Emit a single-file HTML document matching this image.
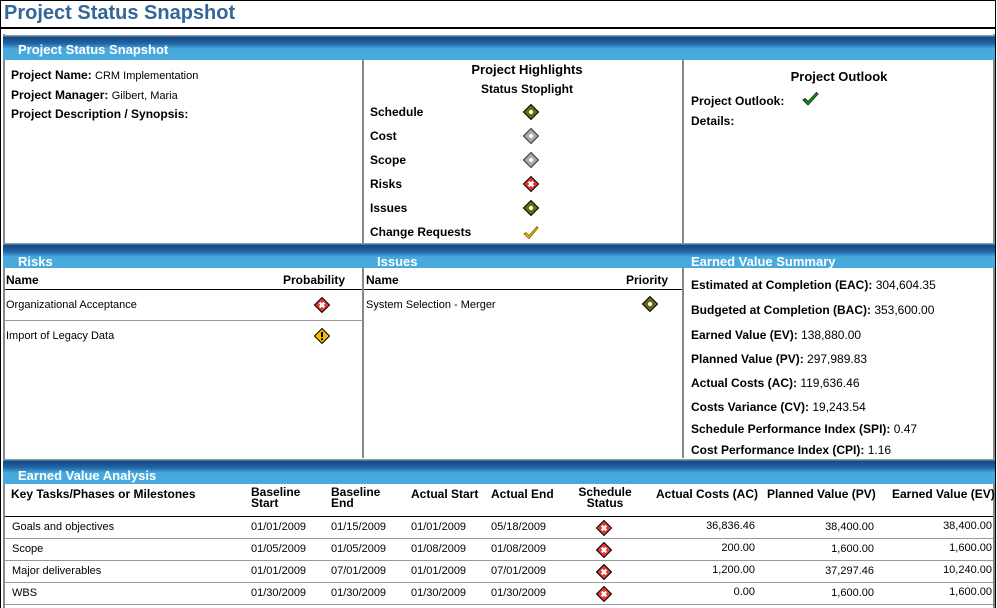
<!DOCTYPE html>
<html><head><meta charset="utf-8"><style>
*{margin:0;padding:0;box-sizing:border-box}
body{width:997px;height:608px;background:#fff;font-family:"Liberation Sans",Arial,sans-serif;color:#000;position:relative;overflow:hidden}
.a{position:absolute;white-space:nowrap}
.b{font-weight:bold;font-size:12px}
.r{font-size:11px}
.bar{position:absolute;height:25px;background:linear-gradient(#8a9bb0 0,#8a9bb0 1px,#154c86 2px,#1a5590 5px,#1f62a0 8px,#2b78b8 10px,#3990cc 12px,#48a9dd 14px,#48a9dd 100%);color:#fff;font-weight:bold;font-size:13px;padding:8px 0 0 15px;line-height:13px}
.vl{position:absolute;width:2px;background:#888}
.gl{position:absolute;height:1px;background:#999}
.bl{position:absolute;height:1px;background:#000}
svg{position:absolute}
</style></head><body>
<div style="position:absolute;left:0;top:0;width:996px;height:608px;border:1px solid #000;border-bottom:none"></div>
<div class="a" style="left:4px;top:2px;font-size:20px;font-weight:bold;color:#33669a">Project Status Snapshot</div>
<div class="bl" style="left:0;top:27px;width:996px;height:2px;background:#000"></div>

<div class="vl" style="left:3px;top:34px;height:574px"></div>
<div class="vl" style="left:993px;top:34px;height:574px"></div>

<div class="bar" style="left:3px;top:35px;width:992px;">Project Status Snapshot</div>
<div class="vl" style="left:362px;top:60px;height:184px"></div>
<div class="vl" style="left:682px;top:60px;height:184px"></div>

<div class="a b" style="left:11px;top:68px">Project Name: <span class="r" style="font-weight:normal">CRM Implementation</span></div>
<div class="a b" style="left:11px;top:88px">Project Manager: <span class="r" style="font-weight:normal">Gilbert, Maria</span></div>
<div class="a b" style="left:11px;top:107px">Project Description / Synopsis:</div>

<div class="a b" style="left:364px;width:326px;text-align:center;top:62px;font-size:13px">Project Highlights</div>
<div class="a b" style="left:364px;width:326px;text-align:center;top:82px">Status Stoplight</div>
<div class="a b" style="left:370px;top:105px">Schedule</div>
<div class="a b" style="left:370px;top:129px">Cost</div>
<div class="a b" style="left:370px;top:153px">Scope</div>
<div class="a b" style="left:370px;top:177px">Risks</div>
<div class="a b" style="left:370px;top:201px">Issues</div>
<div class="a b" style="left:370px;top:225px">Change Requests</div>

<svg width="0" height="0"><defs>
<g id="dg"><path d="M8 0.5L15.5 8L8 15.5L0.5 8Z" fill="#6b6b10" stroke="#000"/><circle cx="8" cy="8" r="2" fill="#fff"/></g>
<g id="dy"><path d="M8 0.5L15.5 8L8 15.5L0.5 8Z" fill="#aaa" stroke="#333"/><circle cx="8" cy="8" r="2" fill="#fff"/></g>
<g id="dr"><path d="M8 0.5L15.5 8L8 15.5L0.5 8Z" fill="#e03a30" stroke="#000"/><path d="M5.7 5.7L10.3 10.3M10.3 5.7L5.7 10.3" stroke="#fff" stroke-width="2.4"/></g>
<g id="dw"><path d="M8 0.5L15.5 8L8 15.5L0.5 8Z" fill="#f0c000" stroke="#000"/><path d="M8 4V9" stroke="#000" stroke-width="2"/><rect x="7" y="10.2" width="2" height="2"/></g>
</defs></svg>
<svg style="left:523px;top:104px" width="16" height="16"><use href="#dg"/></svg>
<svg style="left:523px;top:128px" width="16" height="16"><use href="#dy"/></svg>
<svg style="left:523px;top:152px" width="16" height="16"><use href="#dy"/></svg>
<svg style="left:523px;top:176px" width="16" height="16"><use href="#dr"/></svg>
<svg style="left:523px;top:200px" width="16" height="16"><use href="#dg"/></svg>
<svg style="left:523px;top:225px" width="16" height="15"><path d="M1 9L3 7.5L6 10.5L14 1.5L15 3L6 13.5Z" fill="#f5c000" stroke="#7a5a00" stroke-width="0.8"/></svg>

<div class="a b" style="left:684px;width:310px;text-align:center;top:69px;font-size:13px">Project Outlook</div>
<div class="a b" style="left:691px;top:94px">Project Outlook:</div>
<div class="a b" style="left:691px;top:114px">Details:</div>
<svg style="left:802px;top:91px" width="17" height="16"><path d="M1 9L3 7.5L6 10.5L14.5 1.5L16 3L6 14Z" fill="#1e9a1e" stroke="#003000" stroke-width="0.9"/></svg>

<div class="bar" style="left:3px;top:243px;width:992px;padding-top:12px"><span style="position:absolute;left:15px">Risks</span><span style="position:absolute;left:374px">Issues</span><span style="position:absolute;left:688px">Earned Value Summary</span></div>
<div class="vl" style="left:362px;top:268px;height:190px"></div>
<div class="vl" style="left:682px;top:268px;height:190px"></div>

<div class="a b" style="left:6px;top:273px">Name</div>
<div class="a b" style="left:283px;top:273px">Probability</div>
<div class="bl" style="left:5px;top:289px;width:357px"></div>
<div class="a r" style="left:6px;top:299px">Organizational Acceptance</div>
<svg style="left:314px;top:297px" width="16" height="16"><use href="#dr"/></svg>
<div class="gl" style="left:5px;top:320px;width:357px"></div>
<div class="a r" style="left:6px;top:330px">Import of Legacy Data</div>
<svg style="left:314px;top:328px" width="16" height="16"><use href="#dw"/></svg>

<div class="a b" style="left:366px;top:273px">Name</div>
<div class="a b" style="left:626px;top:273px">Priority</div>
<div class="bl" style="left:364px;top:289px;width:318px"></div>
<div class="a r" style="left:366px;top:299px">System Selection - Merger</div>
<svg style="left:642px;top:296px" width="16" height="16"><use href="#dg"/></svg>

<div class="a b" style="left:691px;top:278px">Estimated at Completion (EAC): <span style="font-weight:normal">304,604.35</span></div>
<div class="a b" style="left:691px;top:303px">Budgeted at Completion (BAC): <span style="font-weight:normal">353,600.00</span></div>
<div class="a b" style="left:691px;top:328px">Earned Value (EV): <span style="font-weight:normal">138,880.00</span></div>
<div class="a b" style="left:691px;top:352px">Planned Value (PV): <span style="font-weight:normal">297,989.83</span></div>
<div class="a b" style="left:691px;top:376px">Actual Costs (AC): <span style="font-weight:normal">119,636.46</span></div>
<div class="a b" style="left:691px;top:400px">Costs Variance (CV): <span style="font-weight:normal">19,243.54</span></div>
<div class="a b" style="left:691px;top:422px">Schedule Performance Index (SPI): <span style="font-weight:normal">0.47</span></div>
<div class="a b" style="left:691px;top:443px">Cost Performance Index (CPI): <span style="font-weight:normal">1.16</span></div>

<div class="bar" style="left:3px;top:459px;width:992px;padding-top:10px">Earned Value Analysis</div>
<div class="a b" style="left:11px;top:487px">Key Tasks/Phases or Milestones</div>
<div class="a b" style="left:251px;top:487px;line-height:11px">Baseline<br>Start</div>
<div class="a b" style="left:331px;top:487px;line-height:11px">Baseline<br>End</div>
<div class="a b" style="left:411px;top:487px">Actual Start</div>
<div class="a b" style="left:491px;top:487px">Actual End</div>
<div class="a b" style="left:568px;width:74px;text-align:center;top:487px;line-height:11px">Schedule<br>Status</div>
<div class="a b" style="left:656px;top:487px">Actual Costs (AC)</div>
<div class="a b" style="left:767px;top:487px">Planned Value (PV)</div>
<div class="a b" style="left:892px;top:487px">Earned Value (EV)</div>
<div class="bl" style="left:5px;top:516px;width:988px"></div>
<div class="gl" style="left:5px;top:538px;width:988px"></div>
<div class="gl" style="left:5px;top:560px;width:988px"></div>
<div class="gl" style="left:5px;top:582px;width:988px"></div>
<div class="gl" style="left:5px;top:604px;width:988px"></div>

<div class="a r" style="left:12px;top:521px">Goals and objectives</div>
<div class="a r" style="left:12px;top:543px">Scope</div>
<div class="a r" style="left:12px;top:565px">Major deliverables</div>
<div class="a r" style="left:12px;top:587px">WBS</div>

<div class="a r" style="left:251px;top:521px">01/01/2009</div><div class="a r" style="left:331px;top:521px">01/15/2009</div><div class="a r" style="left:411px;top:521px">01/01/2009</div><div class="a r" style="left:491px;top:521px">05/18/2009</div>
<div class="a r" style="left:251px;top:543px">01/05/2009</div><div class="a r" style="left:331px;top:543px">01/05/2009</div><div class="a r" style="left:411px;top:543px">01/08/2009</div><div class="a r" style="left:491px;top:543px">01/08/2009</div>
<div class="a r" style="left:251px;top:565px">01/01/2009</div><div class="a r" style="left:331px;top:565px">07/01/2009</div><div class="a r" style="left:411px;top:565px">01/01/2009</div><div class="a r" style="left:491px;top:565px">07/01/2009</div>
<div class="a r" style="left:251px;top:587px">01/30/2009</div><div class="a r" style="left:331px;top:587px">01/30/2009</div><div class="a r" style="left:411px;top:587px">01/30/2009</div><div class="a r" style="left:491px;top:587px">01/30/2009</div>

<svg style="left:596px;top:520px" width="16" height="16"><use href="#dr"/></svg>
<svg style="left:596px;top:542px" width="16" height="16"><use href="#dr"/></svg>
<svg style="left:596px;top:564px" width="16" height="16"><use href="#dr"/></svg>
<svg style="left:596px;top:586px" width="16" height="16"><use href="#dr"/></svg>

<div class="a r" style="right:242px;top:520px">36,836.46</div><div class="a r" style="right:123px;top:521px">38,400.00</div><div class="a r" style="right:5px;top:520px">38,400.00</div>
<div class="a r" style="right:242px;top:542px">200.00</div><div class="a r" style="right:123px;top:543px">1,600.00</div><div class="a r" style="right:5px;top:542px">1,600.00</div>
<div class="a r" style="right:242px;top:564px">1,200.00</div><div class="a r" style="right:123px;top:565px">37,297.46</div><div class="a r" style="right:5px;top:564px">10,240.00</div>
<div class="a r" style="right:242px;top:586px">0.00</div><div class="a r" style="right:123px;top:587px">1,600.00</div><div class="a r" style="right:5px;top:586px">1,600.00</div>
</body></html>
